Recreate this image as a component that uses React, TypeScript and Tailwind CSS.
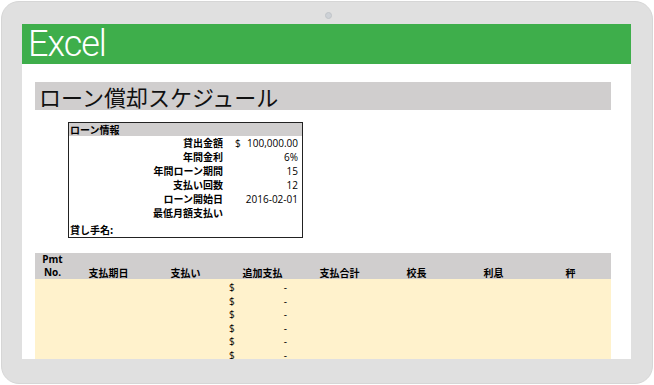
const JP = { fontFamily: '"Noto Sans CJK JP", "Noto Sans", sans-serif' };
const NUM = { fontFamily: '"Open Sans", "Noto Sans CJK JP", sans-serif' };
const HEAD = { fontFamily: 'Roboto, "Open Sans", sans-serif' };

const LOAN_ROWS: [string, string, boolean][] = [
  ['貸出金額', '100,000.00', true],
  ['年間金利', '6%', false],
  ['年間ローン期間', '15', false],
  ['支払い回数', '12', false],
  ['ローン開始日', '2016-02-01', false],
  ['最低月額支払い', '', false],
];

const HEADERS = ['支払期日', '支払い', '追加支払', '支払合計', '校長', '利息', '秤'];

const LoanInfo = () => (
  <div className="ml-[46px] mt-3 w-[235px] border border-[#222] text-black">
    <div className="h-[13px] bg-[#d0cece] pl-[1px] text-[10px] font-bold leading-[13px]" style={JP}>
      ローン情報
    </div>
    {LOAN_ROWS.map(([label, value, dollar]) => (
      <div key={label} className="grid h-[14px] grid-cols-[154px_18px_1fr] items-center text-[10px] leading-[14px]">
        <span className="text-right font-bold" style={JP}>
          {label}
        </span>
        <span className="pl-[12px]" style={NUM}>
          {dollar ? '$' : ''}
        </span>
        <span className="pr-[4px] text-right" style={NUM}>
          {value}
        </span>
      </div>
    ))}
    <div className="mt-[3px] h-[14px] pl-[1px] text-[10px] font-bold leading-[14px]" style={JP}>
      貸し手名:
    </div>
  </div>
);

const Schedule = () => (
  <div className="ml-[13px] mt-[15px] w-[576px]">
    <div className="grid h-[26px] grid-cols-[35px_repeat(7,77px)] items-end bg-[#d0cece] text-[10px] font-bold leading-[13px] text-black">
      <div className="text-center" style={NUM}>
        <div>Pmt</div>
        <div>No.</div>
      </div>
      {HEADERS.map((h) => (
        <div key={h} className="text-center" style={JP}>
          {h}
        </div>
      ))}
    </div>
    <div className="bg-[#fff2cc] pt-[1px] pb-[6px]">
      {[0, 1, 2, 3, 4, 5].map((i) => (
        <div key={i} className="grid h-[13.5px] grid-cols-[35px_repeat(7,77px)] items-center text-[10px] text-black" style={NUM}>
          <span />
          <span />
          <span />
          <div className="flex justify-between pl-[5px] pr-[14px]">
            <span>$</span>
            <span>-</span>
          </div>
        </div>
      ))}
    </div>
  </div>
);

export default function App() {
  return (
    <div className="h-[385px] w-[654px] bg-white">
      <div className="relative ml-[1px] mt-[1px] h-[383px] w-[652px] rounded-[18px] border border-[#d6d6d6] bg-[#e0e0e0] pl-[20px] pt-[22px]">
        <span className="absolute left-[323px] top-[10px] h-[7px] w-[7px] rounded-full border border-[#c0c4c8] bg-[#cdd1d6]" />
        <div className="h-[335px] w-[609px] overflow-hidden bg-white">
          <div className="flex h-[40px] items-center bg-[#3eae4b] pl-[6px]">
            <span className="text-[36px] font-light leading-none tracking-[-1px] text-white" style={HEAD}>
              Excel
            </span>
          </div>
          <div className="ml-[13px] mt-[18px] flex h-[28px] w-[576px] items-center bg-[#d0cece] pl-[4px]">
            <span className="text-[22px] leading-none text-[#111]" style={JP}>
              ローン償却スケジュール
            </span>
          </div>
          <LoanInfo />
          <Schedule />
        </div>
      </div>
    </div>
  );
}
